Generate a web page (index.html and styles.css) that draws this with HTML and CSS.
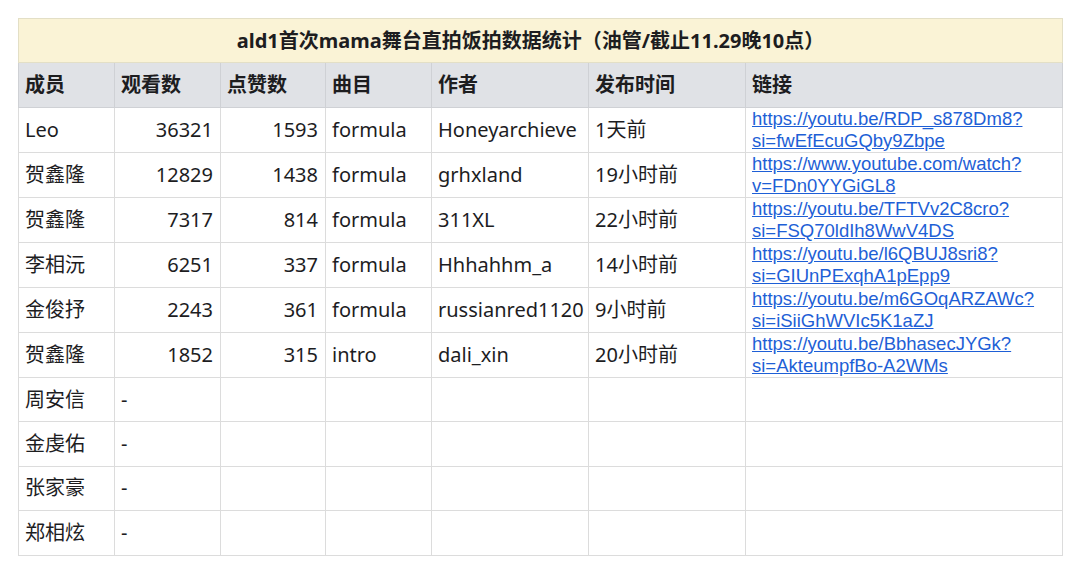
FILE: index.html
```html
<!DOCTYPE html>
<html lang="zh">
<head>
<meta charset="utf-8">
<link rel="stylesheet" href="styles.css">
</head>
<body>
<div class="page">
<table class="stats">
<colgroup>
<col class="c1"><col class="c2"><col class="c3"><col class="c4"><col class="c5"><col class="c6"><col class="c7">
</colgroup>
<thead>
<tr class="title-row"><th colspan="7">ald1首次mama舞台直拍饭拍数据统计（油管/截止11.29晚10点）</th></tr>
<tr class="head-row"><th>成员</th><th>观看数</th><th>点赞数</th><th>曲目</th><th>作者</th><th>发布时间</th><th>链接</th></tr>
</thead>
<tbody>
<tr><td>Leo</td><td class="num">36321</td><td class="num">1593</td><td>formula</td><td>Honeyarchieve</td><td>1天前</td><td class="link"><a href="#">https://youtu.be/RDP_s878Dm8?<br>si=fwEfEcuGQby9Zbpe</a></td></tr>
<tr><td>贺鑫隆</td><td class="num">12829</td><td class="num">1438</td><td>formula</td><td>grhxland</td><td>19小时前</td><td class="link"><a href="#">https://www.youtube.com/watch?<br>v=FDn0YYGiGL8</a></td></tr>
<tr><td>贺鑫隆</td><td class="num">7317</td><td class="num">814</td><td>formula</td><td>311XL</td><td>22小时前</td><td class="link"><a href="#">https://youtu.be/TFTVv2C8cro?<br>si=FSQ70ldIh8WwV4DS</a></td></tr>
<tr><td>李相沅</td><td class="num">6251</td><td class="num">337</td><td>formula</td><td>Hhhahhm_a</td><td>14小时前</td><td class="link"><a href="#">https://youtu.be/l6QBUJ8sri8?<br>si=GIUnPExqhA1pEpp9</a></td></tr>
<tr><td>金俊抒</td><td class="num">2243</td><td class="num">361</td><td>formula</td><td>russianred1120</td><td>9小时前</td><td class="link"><a href="#">https://youtu.be/m6GOqARZAWc?<br>si=iSiiGhWVIc5K1aZJ</a></td></tr>
<tr><td>贺鑫隆</td><td class="num">1852</td><td class="num">315</td><td>intro</td><td>dali_xin</td><td>20小时前</td><td class="link"><a href="#">https://youtu.be/BbhasecJYGk?<br>si=AkteumpfBo-A2WMs</a></td></tr>
<tr><td>周安信</td><td>-</td><td></td><td></td><td></td><td></td><td></td></tr>
<tr><td>金虔佑</td><td>-</td><td></td><td></td><td></td><td></td><td></td></tr>
<tr><td>张家豪</td><td>-</td><td></td><td></td><td></td><td></td><td></td></tr>
<tr><td>郑相炫</td><td>-</td><td></td><td></td><td></td><td></td><td></td></tr>
</tbody>
</table>
</div>
</body>
</html>
```

FILE: styles.css
```css
html, body {
  margin: 0;
  padding: 0;
  background: #ffffff;
}
.page {
  padding: 18px 18px 0 18px;
  font-family: "Noto Sans", "Noto Sans CJK SC", sans-serif;
  color: #1d1d1f;
}
.stats {
  border-collapse: collapse;
  table-layout: fixed;
  width: 1044px;
}
.c1 { width: 96px; }
.c2 { width: 106px; }
.c3 { width: 105px; }
.c4 { width: 106px; }
.c5 { width: 157px; }
.c6 { width: 157px; }
.c7 { width: 317px; }
.stats th, .stats td {
  border: 1px solid #dcdcdc;
  padding: 0 6px;
  font-size: 20px;
  line-height: 24px;
  text-align: left;
  vertical-align: middle;
  white-space: nowrap;
  overflow: hidden;
}
.title-row th {
  height: 43px;
  background: #faf3d6;
  text-align: center;
  padding-right: 26px;
  font-size: 20px;
  font-weight: bold;
  border-color: #e3dfc6;
}
.head-row th {
  height: 44px;
  background: #e0e2e6;
  font-weight: bold;
  border-color: #cfd1d5;
}
.stats tbody td {
  height: 43.4px;
}
.stats td.num {
  text-align: right;
  padding-right: 7px;
}
.stats td.link {
  font-family: "Liberation Sans", "Noto Sans CJK SC", sans-serif;
  font-size: 18.5px;
  line-height: 22px;
  overflow: visible;
}
.link a {
  display: block;
  color: #1e5fd6;
  text-decoration: underline;
}
```
